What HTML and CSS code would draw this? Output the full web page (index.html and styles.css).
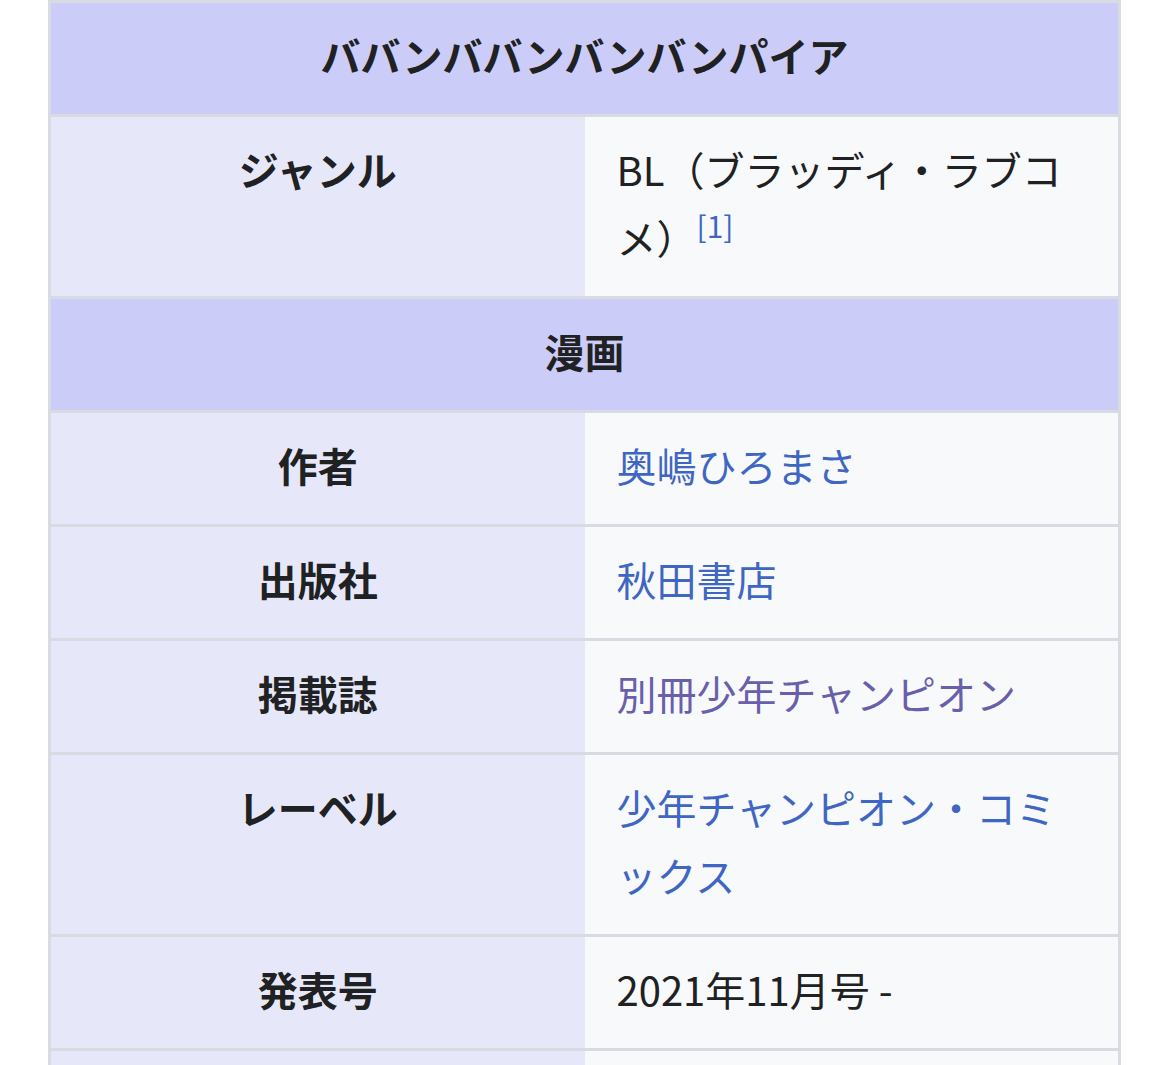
FILE: index.html
```html
<!DOCTYPE html>
<html lang="ja">
<head>
    <meta charset="UTF-8">
    <meta name="viewport" content="width=device-width, initial-scale=1.0">
    <title>ババンババンバンバンパイア</title>
    <link rel="stylesheet" href="styles.css">
</head>
<body>
    <table class="infobox">
        <tbody>
            <tr>
                <th class="infobox-title" colspan="2">ババンババンバンバンパイア</th>
            </tr>
            <tr>
                <th class="infobox-label">ジャンル</th>
                <td class="infobox-data">BL（ブラッディ・ラブコメ）<sup class="reference"><a href="#cite-1">[1]</a></sup></td>
            </tr>
            <tr>
                <th class="infobox-title" colspan="2">漫画</th>
            </tr>
            <tr>
                <th class="infobox-label">作者</th>
                <td class="infobox-data"><a href="#">奥嶋ひろまさ</a></td>
            </tr>
            <tr>
                <th class="infobox-label">出版社</th>
                <td class="infobox-data"><a href="#">秋田書店</a></td>
            </tr>
            <tr>
                <th class="infobox-label">掲載誌</th>
                <td class="infobox-data"><a href="#" class="visited">別冊少年チャンピオン</a></td>
            </tr>
            <tr>
                <th class="infobox-label">レーベル</th>
                <td class="infobox-data"><a href="#">少年チャンピオン・コミックス</a></td>
            </tr>
            <tr>
                <th class="infobox-label">発表号</th>
                <td class="infobox-data">2021年11月号 -</td>
            </tr>
            <tr>
                <th class="infobox-label">巻数</th>
                <td class="infobox-data">既刊4巻</td>
            </tr>
        </tbody>
    </table>
</body>
</html>
```

FILE: styles.css
```css
body {
    font-family: "Noto Sans CJK JP", "Noto Sans", sans-serif;
    margin: 0;
    padding: 0;
    background-color: #fff;
    color: #202122;
}
.infobox {
    width: 1073px;
    margin: 0 0 0 48px;
    border-collapse: collapse;
    border: 3px solid #d8dbe2;
    table-layout: fixed;
    font-size: 40px;
    line-height: 68px;
}
.infobox th,
.infobox td {
    border-top: 3px solid #d8dbe2;
    padding: 18px 32px 25px;
    vertical-align: top;
}
.infobox-title {
    background-color: #ccccf9;
    text-align: center;
    font-weight: bold;
}
.infobox-label {
    width: 50%;
    background-color: #e6e8fa;
    text-align: center;
    font-weight: bold;
}
.infobox-data {
    background-color: #f8f9fb;
    text-align: left;
    font-weight: normal;
}
.infobox a {
    color: #3e66c2;
    text-decoration: none;
}
.infobox a.visited {
    color: #6a5fab;
}
.reference {
    font-size: 30px;
    line-height: 1;
    vertical-align: 16px;
}
```
